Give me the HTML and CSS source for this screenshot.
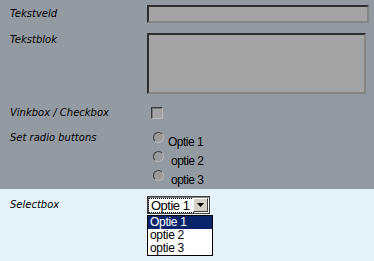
FILE: index.html
```html
<!DOCTYPE html>
<html>
<head>
<meta charset="utf-8">
<link rel="stylesheet" href="styles.css">
</head>
<body>
<div class="form">
  <div class="row r1">
    <div class="label">Tekstveld</div>
    <div class="field"><div class="input"></div></div>
  </div>
  <div class="row r2">
    <div class="label">Tekstblok</div>
    <div class="field"><div class="textarea"></div></div>
  </div>
  <div class="row r3">
    <div class="label">Vinkbox / Checkbox</div>
    <div class="field"><div class="checkbox"></div></div>
  </div>
  <div class="row r4">
    <div class="label">Set radio buttons</div>
    <div class="field radios">
      <div class="radio-row"><span class="radio"></span><span class="rtext first">Optie 1</span></div>
      <div class="radio-row"><span class="radio"></span><span class="rtext">optie 2</span></div>
      <div class="radio-row"><span class="radio"></span><span class="rtext">optie 3</span></div>
    </div>
  </div>
</div>
<div class="form blue">
  <div class="row r5">
    <div class="label">Selectbox</div>
    <div class="field">
      <div class="select-wrap">
        <div class="select">
          <span class="sel-text"><span class="focus">Optie 1</span></span>
          <span class="arrow"><svg width="7" height="4" viewBox="0 0 7 4"><path d="M0 0h7L3.5 4z" fill="#000"/></svg></span>
        </div>
        <div class="list">
          <div class="opt active">Optie 1</div>
          <div class="opt">optie 2</div>
          <div class="opt">optie 3</div>
        </div>
      </div>
    </div>
  </div>
</div>
</body>
</html>
```
FILE: styles.css
```css
html, body { margin: 0; padding: 0; }
body {
  width: 374px;
  height: 261px;
  overflow: hidden;
  background: #e5f2fa;
  font-family: "Liberation Sans", Arial, sans-serif;
}
.form {
  background: #939aa2;
  padding: 5px 0 0 10px;
  height: 184px;
  box-sizing: content-box;
}
.form.blue {
  background: #e5f2fa;
  height: 72px;
  padding-top: 7px;
}
.row {
  display: grid;
  grid-template-columns: 137px 1fr;
}
.label {
  font-family: "DejaVu Sans", Verdana, sans-serif;
  font-style: italic;
  font-size: 10px;
  color: #000;
  line-height: 12px;
}
.r1 { height: 28px; }
.r1 .label { padding-top: 3px; }
.r2 { height: 71px; }
.r2 .label { padding-top: 1px; }
.r3 { height: 27px; }
.r3 .label { padding-top: 3px; }
.r3 .field { padding-top: 3px; padding-left: 4px; }
.r4 .label { padding-top: 1px; }
.r5 .label { padding-top: 3px; }

.input, .textarea {
  background: #a3a3a3;
  border-style: solid;
  border-width: 2px;
  border-color: #2e2e2e #858585 #858585 #2e2e2e;
  box-sizing: border-box;
}
.input { width: 222px; height: 18px; }
.textarea { width: 219px; height: 61px; }

.checkbox {
  width: 12px;
  height: 12px;
  box-sizing: border-box;
  border: 1px solid;
  border-color: #3a3a3a #b8b8b8 #b8b8b8 #3a3a3a;
  background: #a3a3a3;
  box-shadow: inset 1px 1px 0 #7a7a7a;
}

.radios { padding-left: 6px; padding-top: 0; }
.radio-row {
  display: flex;
  align-items: flex-start;
  height: 19px;
}
.radio {
  width: 11px;
  height: 11px;
  box-sizing: border-box;
  border-radius: 50%;
  border: 1px solid;
  border-color: #3d3d3d #b5b5b5 #b5b5b5 #3d3d3d;
  background: #9b9b9b;
  margin-top: 1px;
}
.rtext {
  font-size: 12px;
  letter-spacing: -0.5px;
  line-height: 14px;
  color: #000;
  margin-left: 7px;
  margin-top: 4px;
}
.rtext.first { margin-left: 4px; }

.select-wrap { width: 66px; }
.select {
  width: 63px;
  height: 18px;
  box-sizing: border-box;
  border: 1px solid #404040;
  background: #ffffff;
  display: flex;
  align-items: stretch;
  padding: 1px;
  box-shadow: inset 1px 1px 0 #808080;
}
.sel-text {
  flex: 1;
  display: flex;
  align-items: center;
  font-size: 13px;
  letter-spacing: -0.5px;
  color: #000;
}
.focus {
  outline: 1px dotted #000;
  outline-offset: 0;
  width: 42px;
  line-height: 13px;
  padding-left: 2px;
}
.arrow {
  width: 15px;
  background: #d4d0c8;
  border-style: solid;
  border-width: 1px;
  border-color: #fff #404040 #404040 #fff;
  box-sizing: border-box;
  display: flex;
  align-items: center;
  justify-content: center;
}
.list {
  width: 66px;
  margin-top: 1px;
  border: 1px solid #000;
  background: #fff;
  box-sizing: border-box;
  font-size: 12px;
  letter-spacing: -0.3px;
  line-height: 13px;
  color: #000;
}
.opt { padding-left: 2px; height: 13px; }
.opt.active { background: #0a246a; color: #fff; }
```
